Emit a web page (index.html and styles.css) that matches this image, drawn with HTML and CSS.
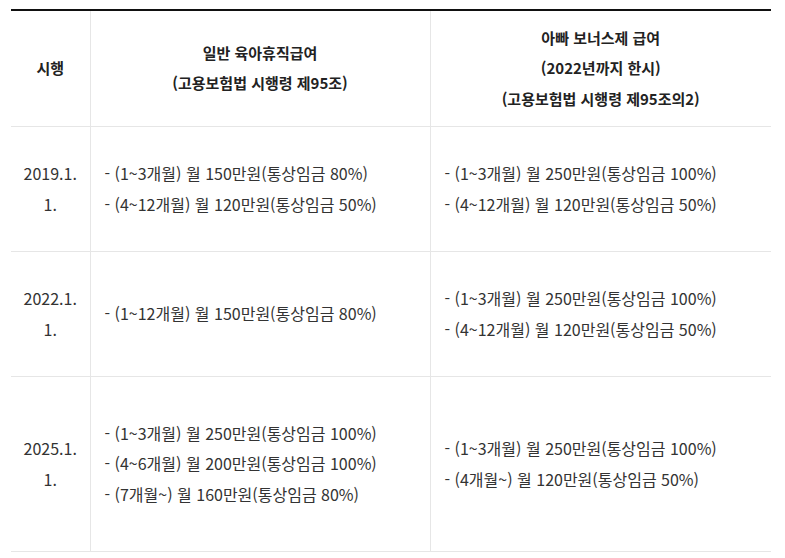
FILE: index.html
```html
<!DOCTYPE html>
<html lang="ko">
<head>
<meta charset="utf-8">
<link rel="stylesheet" href="styles.css">
</head>
<body>
<table class="tbl">
  <colgroup>
    <col class="c1">
    <col class="c2">
    <col class="c3">
  </colgroup>
  <thead>
    <tr class="head">
      <th>시행</th>
      <th>일반 육아휴직급여<br>(고용보험법 시행령 제95조)</th>
      <th>아빠 보너스제 급여<br>(2022년까지 한시)<br>(고용보험법 시행령 제95조의2)</th>
    </tr>
  </thead>
  <tbody>
    <tr class="row">
      <td class="date">2019.1.<br>1.</td>
      <td>- (1~3개월) 월 150만원(통상임금 80%)<br>- (4~12개월) 월 120만원(통상임금 50%)</td>
      <td>- (1~3개월) 월 250만원(통상임금 100%)<br>- (4~12개월) 월 120만원(통상임금 50%)</td>
    </tr>
    <tr class="row">
      <td class="date">2022.1.<br>1.</td>
      <td>- (1~12개월) 월 150만원(통상임금 80%)</td>
      <td>- (1~3개월) 월 250만원(통상임금 100%)<br>- (4~12개월) 월 120만원(통상임금 50%)</td>
    </tr>
    <tr class="row tall">
      <td class="date">2025.1.<br>1.</td>
      <td>- (1~3개월) 월 250만원(통상임금 100%)<br>- (4~6개월) 월 200만원(통상임금 100%)<br>- (7개월~) 월 160만원(통상임금 80%)</td>
      <td>- (1~3개월) 월 250만원(통상임금 100%)<br>- (4개월~) 월 120만원(통상임금 50%)</td>
    </tr>
  </tbody>
</table>
</body>
</html>
```
FILE: styles.css
```css
html, body {
  margin: 0;
  padding: 0;
  background: #ffffff;
}
body {
  padding: 9px 14px 0 11px;
  font-family: "Noto Sans CJK KR", "Noto Sans", sans-serif;
  font-size: 16px;
  color: #333333;
}
.tbl {
  width: 760px;
  border-collapse: collapse;
  table-layout: fixed;
  border-top: 2px solid #111111;
}
.c1 { width: 79px; }
.c2 { width: 340px; }
.c3 { width: 341px; }
.tbl th,
.tbl td {
  border-bottom: 1px solid #e6e6e6;
  border-left: 1px solid #e6e6e6;
  vertical-align: middle;
  line-height: 30.5px;
  padding: 0 14px;
}
.tbl th:first-child,
.tbl td:first-child {
  border-left: none;
  padding: 0 4px;
}
.tbl th {
  font-weight: 700;
  color: #222222;
  text-align: center;
  font-size: 15px;
}
.head { height: 116px; }
.row { height: 125px; }
.row.tall { height: 175px; }
.tbl td { text-align: left; }
.tbl td.date { text-align: center; }
```
